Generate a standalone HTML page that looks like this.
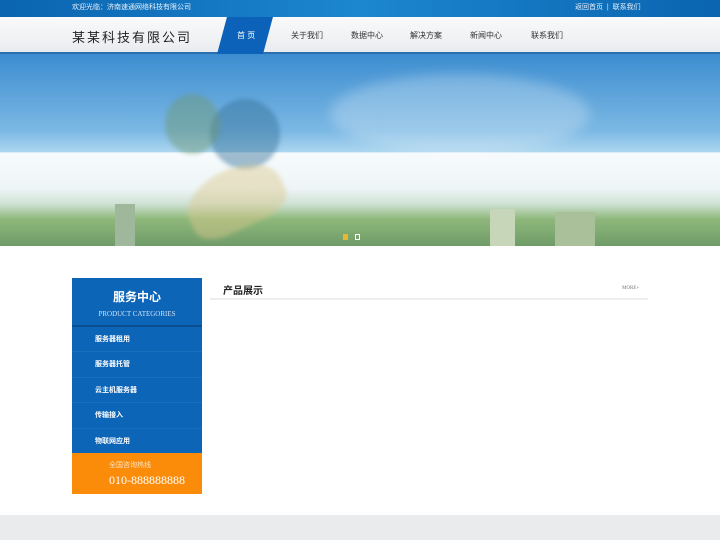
<!DOCTYPE html>
<html><head><meta charset="utf-8">
<style>
*{margin:0;padding:0;box-sizing:border-box}
body{width:720px;height:540px;overflow:hidden;background:#fff;font-family:"Liberation Sans","Noto Sans CJK SC",sans-serif;position:relative}
.top{position:absolute;left:0;top:0;width:720px;height:17px;background:linear-gradient(90deg,#0b64b0,#1c86cf 50%,#0b64b0);color:#e6f0fa;font-size:7px;line-height:16px}
.nav{position:absolute;left:0;top:17px;width:720px;height:37px;background:linear-gradient(#fafafa,#e9ecef);border-bottom:2px solid #2b6fae}
.logo{position:absolute;left:72px;top:10px;font-size:13px;letter-spacing:2px;color:#222}
.nav a{position:absolute;top:13px;font-size:8px;color:#333}
.act{position:absolute;left:222px;top:0;width:46px;height:37px;background:#0b62b8;transform:skewX(-15deg)}
.banner{position:absolute;left:0;top:54px;width:720px;height:192px;background:linear-gradient(#3c8dd0 0,#7bb8e4 40%,#acd6ef 51%,#f7fbfd 51.5%,#eef5f6 70%,#cfe2d5 78%,#8eb87a 86%,#6f9b68 100%)}
.cloud{position:absolute;border-radius:50%;background:rgba(255,255,255,.25);filter:blur(6px)}
.sb{position:absolute;left:72px;top:278px;width:130px;height:216px;background:#0d65b8}
.sb h3{text-align:center;color:#fff;font-size:12px;margin-top:10px}
.sb p{text-align:center;color:#cfe3f5;font-family:"Liberation Serif",serif;font-size:7px;margin-top:5px}
.sb ul{list-style:none;position:absolute;top:47px;left:0;width:130px;border-top:2px solid #0a4e92}
.sb li{height:25.4px;line-height:25px;padding-left:23px;font-size:7px;color:#fff;font-weight:bold;border-bottom:1px solid #1a6fbd}
.hot{position:absolute;left:0;top:175px;width:130px;height:41px;background:#fb8c0a;color:#fff}
.hot .a{position:absolute;left:37px;top:7px;font-size:7px;color:#fde3c0}
.hot .b{position:absolute;left:37px;top:20px;font-size:12px;font-family:"Liberation Serif",serif}
</style></head><body>
<div class="top"><span style="position:absolute;left:72px">欢迎光临：济南速通网络科技有限公司</span><span style="position:absolute;left:575px">返回首页 &nbsp;|&nbsp; 联系我们</span></div>
<div class="nav">
<div class="logo">某某科技有限公司</div>
<div class="act"></div>
<a style="left:237px;color:#fff">首 页</a>
<a style="left:291px">关于我们</a>
<a style="left:351px">数据中心</a>
<a style="left:410px">解决方案</a>
<a style="left:470px">新闻中心</a>
<a style="left:531px">联系我们</a>
</div>
<div class="banner">
<div class="cloud" style="left:330px;top:20px;width:260px;height:80px"></div>
<div style="position:absolute;left:210px;top:45px;width:70px;height:70px;border-radius:50%;background:rgba(50,110,150,.45);filter:blur(2px)"></div>
<div style="position:absolute;left:165px;top:40px;width:55px;height:60px;border-radius:50%;background:rgba(110,150,110,.45);filter:blur(2px)"></div>
<div style="position:absolute;left:185px;top:115px;width:100px;height:60px;border-radius:50% 50% 30% 30%;background:rgba(220,200,140,.45);transform:rotate(-25deg);filter:blur(2px)"></div>
<div style="position:absolute;left:490px;top:155px;width:25px;height:37px;background:#c7d6b8"></div>
<div style="position:absolute;left:555px;top:158px;width:40px;height:34px;background:#a9c09a"></div>
<div style="position:absolute;left:115px;top:150px;width:20px;height:42px;background:#9fb79a"></div>
<div style="position:absolute;left:343px;top:180px;width:5px;height:6px;background:#e7b830"></div>
<div style="position:absolute;left:355px;top:180px;width:5px;height:6px;border:1px solid #fff"></div>
</div>
<div class="sb"><h3>服务中心</h3><p>PRODUCT CATEGORIES</p>
<ul><li>服务器租用</li><li>服务器托管</li><li>云主机服务器</li><li>传输接入</li><li>物联网应用</li></ul>
<div class="hot"><span class="a">全国咨询热线</span><span class="b">010-888888888</span></div></div>
<div style="position:absolute;left:223px;top:282px;font-size:10px;font-weight:bold;color:#222">产品展示</div>
<div style="position:absolute;left:622px;top:286px;font-size:5px;color:#777;font-family:'Liberation Serif',serif">MORE+</div>
<div style="position:absolute;left:210px;top:298px;width:438px;height:2px;background:#eee"></div>
<div style="position:absolute;left:0;top:515px;width:720px;height:25px;background:#eaebec"></div>
</body></html>
